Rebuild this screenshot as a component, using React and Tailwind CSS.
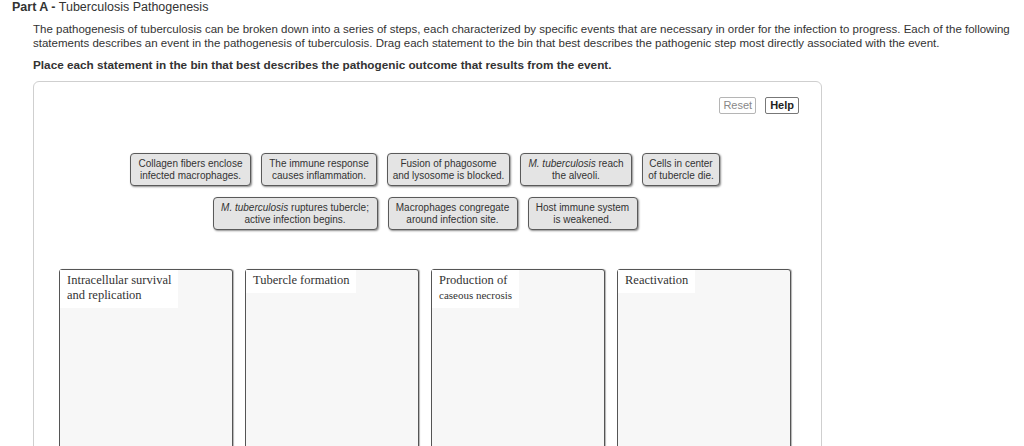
import React from "react";

const rowOne = [
  { w: "w-[121px]", a: "Collagen fibers enclose", b: "infected macrophages." },
  { w: "w-[116px]", a: "The immune response", b: "causes inflammation." },
  { w: "w-[123px]", a: "Fusion of phagosome", b: "and lysosome is blocked." },
  { w: "w-[112px]", a: "reach", b: "the alveoli.", it: true },
  { w: "w-[78px]", a: "Cells in center", b: "of tubercle die." },
];

const rowTwo = [
  { w: "w-[165px]", a: "ruptures tubercle;", b: "active infection begins.", it: true },
  { w: "w-[130px]", a: "Macrophages congregate", b: "around infection site." },
  { w: "w-[110px]", a: "Host immune system", b: "is weakened." },
];

const Tile = ({ item }) => (
  <div
    className={`${item.w} h-[33px] flex flex-col items-center justify-center bg-[#e4e4e4] border border-[#5a5a5a] rounded-[4px] shadow-[1px_1px_2px_rgba(0,0,0,0.45)] text-[10px] leading-[12px] text-[#333] text-center whitespace-nowrap`}
  >
    <span>
      {item.it && <i>M. tuberculosis </i>}
      {item.a}
    </span>
    <span>{item.b}</span>
  </div>
);

const Bin = ({ children }) => (
  <div className="w-[174px] h-[200px] bg-[#f7f7f7] border border-[#555] rounded-t-[3px] shadow-[1px_0_1px_rgba(0,0,0,0.3)]">
    <div className="w-fit bg-white pl-[7px] pr-[7px] pt-[3px] pb-[5px] font-['Liberation_Serif',serif] text-[12.5px] leading-[15px] text-[#333]">
      {children}
    </div>
  </div>
);

export default function App() {
  return (
    <div className="h-[446px] overflow-hidden bg-white font-['Liberation_Sans',Arial,sans-serif] text-[#333]">
      <h2 className="pl-3 text-[12.5px] leading-[15px]">
        <span className="font-bold">Part A -</span> Tuberculosis Pathogenesis
      </h2>
      <div className="ml-[33px]">
        <p className="mt-[7px] w-[985px] text-[11.5px] leading-[14px]">
          The pathogenesis of tuberculosis can be broken down into a series of steps, each characterized by
          specific events that are necessary in order for the infection to progress. Each of the following
          statements describes an event in the pathogenesis of tuberculosis. Drag each statement to the bin
          that best describes the pathogenic step most directly associated with the event.
        </p>
        <p className="mt-[8px] text-[11.75px] leading-[14px] font-bold">
          Place each statement in the bin that best describes the pathogenic outcome that results from the event.
        </p>

        <div className="mt-[9px] w-[789px] h-[400px] border border-[#cfcfcf] rounded-[6px]">
          <div className="flex justify-end gap-[9px] pr-[22px] pt-[15px]">
            <button className="h-[17px] px-[3px] border border-[#b5b5b5] rounded-[2px] text-[11px] leading-[15px] text-[#888]">
              Reset
            </button>
            <button className="h-[17px] px-[4px] border border-[#777] rounded-[2px] text-[11px] leading-[15px] font-bold text-[#222]">
              Help
            </button>
          </div>

          <div className="mt-[39px] pr-[5px] flex flex-col items-center gap-[11px]">
            <div className="flex gap-[10px]">
              {rowOne.map((t, i) => (
                <Tile key={i} item={t} />
              ))}
            </div>
            <div className="flex gap-[10px]">
              {rowTwo.map((t, i) => (
                <Tile key={i} item={t} />
              ))}
            </div>
          </div>

          <div className="mt-[39px] pl-[25px] flex gap-[12px]">
            <Bin>
              Intracellular survival
              <br />
              and replication
            </Bin>
            <Bin>Tubercle formation</Bin>
            <Bin>
              Production of
              <br />
              <span className="text-[11px]">caseous necrosis</span>
            </Bin>
            <Bin>Reactivation</Bin>
          </div>
        </div>
      </div>
    </div>
  );
}
